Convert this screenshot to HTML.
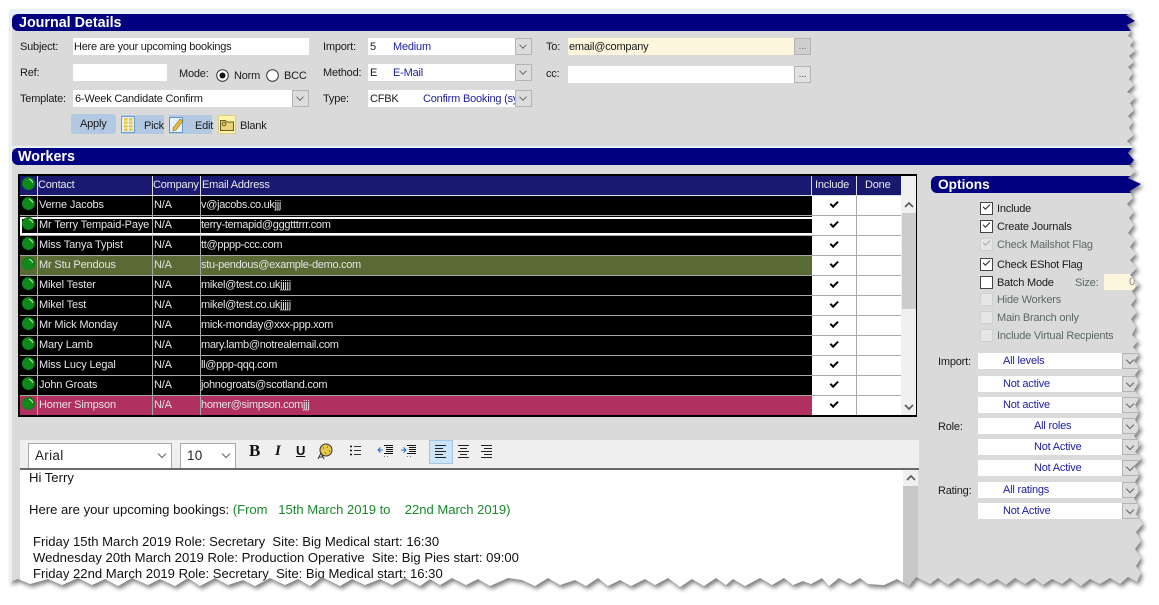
<!DOCTYPE html>
<html><head><meta charset="utf-8"><style>
html,body{margin:0;padding:0;background:#fff}
body{width:1159px;height:605px;overflow:hidden;position:relative;font-family:"Liberation Sans",sans-serif;font-size:11px;letter-spacing:-.2px;color:#1a1a1a}
#shadow{position:absolute;left:0;top:0;width:1159px;height:605px;filter:drop-shadow(2px 3px 2px rgba(0,0,0,.5))}
#page{position:absolute;left:0;top:0;width:1159px;height:605px;background:#dadada;clip-path:polygon(10px 9px,1128px 9px,1132px 13px,1126px 15px,1135px 21px,1127px 25px,1131px 31px,1128px 36px,1134px 40px,1130px 46px,1136px 50px,1129px 56px,1134px 62px,1128px 67px,1133px 73px,1129px 79px,1134px 85px,1127px 92px,1136px 97px,1130px 103px,1134px 110px,1128px 116px,1133px 122px,1129px 128px,1134px 135px,1127px 141px,1133px 147px,1128px 153px,1134px 160px,1129px 166px,1136px 171px,1128px 178px,1141px 184px,1130px 191px,1133px 198px,1127px 204px,1134px 212px,1129px 218px,1134px 225px,1128px 233px,1135px 240px,1130px 247px,1136px 254px,1130px 260px,1137px 268px,1130px 275px,1139px 284px,1132px 291px,1136px 298px,1131px 305px,1137px 312px,1131px 319px,1136px 327px,1132px 335px,1138px 341px,1133px 347px,1139px 354px,1134px 361px,1140px 368px,1135px 375px,1139px 382px,1134px 390px,1140px 397px,1135px 405px,1139px 412px,1135px 420px,1140px 428px,1134px 436px,1141px 444px,1135px 452px,1142px 458px,1134px 466px,1140px 474px,1135px 482px,1140px 490px,1134px 498px,1139px 506px,1136px 514px,1143px 524px,1136px 532px,1141px 541px,1135px 549px,1141px 558px,1136px 566px,1141px 573px,1137px 582px,1128px 577px,1120px 584px,1110px 578px,1100px 584px,1090px 579px,1081px 586px,1070px 578px,1062px 584px,1052px 579px,1043px 585px,1034px 578px,1025px 584px,1015px 578px,1006px 585px,997px 579px,988px 584px,978px 578px,968px 584px,958px 578px,948px 585px,938px 578px,930px 584px,916px 577px,909px 586px,897px 579px,884px 585px,868px 584px,860px 578px,850px 584px,839px 578px,829px 586px,822px 578px,811px 584px,803px 581px,793px 585px,784px 578px,772px 585px,760px 578px,745px 586px,733px 579px,726px 585px,716px 578px,704px 586px,692px 579px,680px 587px,668px 578px,655px 585px,645px 579px,631px 586px,620px 580px,608px 586px,598px 578px,586px 586px,575px 580px,560px 585px,548px 578px,535px 586px,522px 580px,508px 578px,490px 586px,478px 579px,466px 585px,452px 578px,440px 585px,430px 579px,420px 586px,405px 578px,392px 585px,380px 579px,365px 585px,352px 579px,340px 586px,322px 577px,310px 586px,298px 579px,285px 585px,270px 578px,255px 586px,243px 580px,228px 585px,215px 578px,200px 586px,188px 578px,175px 586px,160px 579px,148px 585px,132px 578px,118px 586px,105px 579px,92px 585px,78px 578px,62px 585px,48px 579px,30px 584px,18px 579px,10px 582px)}
.a{position:absolute}
.t{position:absolute;white-space:nowrap;line-height:14px;margin-top:1px}
.b{color:#1c1ca8}
.g{color:#5d6868}
.bar{position:absolute;background:#000080;color:#fff;font-weight:bold;font-size:14.3px;letter-spacing:0;line-height:18px;border-radius:6px 0 0 6px;height:17px;overflow:hidden}
.in{position:absolute;background:#fff;height:17px;overflow:hidden}
.dd{position:absolute;width:15px;height:15px;background:#dcdcdc;border:1px solid #b4b4b4}
.dd:after{content:"";position:absolute;left:4px;top:3px;width:5px;height:5px;border-right:1px solid #666;border-bottom:1px solid #666;transform:rotate(45deg) scale(.9)}
.el{position:absolute;width:15px;height:15px;background:#e2e2e2;border:1px solid #b4b4b4;text-align:center;line-height:16px;font-size:10px;color:#444}
.pb{position:absolute;background:#b3c8e1}
.rw{position:absolute;left:20px;width:881px;height:19px;background:#000;color:#e4e4e4;font-size:11px}
.rw span,.hd span{position:absolute;top:2px;line-height:14px;white-space:nowrap}
.c1{left:19px;letter-spacing:-.15px}.c2{left:134px}.c3{left:181px;letter-spacing:-.3px}
.rw i{position:absolute;top:0;bottom:0;width:1px;background:#a8a8a8}
.inc{position:absolute;left:792px;top:0;width:89px;height:19px;background:#fff}
.inc:before{content:"";position:absolute;left:44px;top:0;width:1px;height:19px;background:#a8a8a8}
.ck{position:absolute;left:18px;top:5px;width:6px;height:2.5px;border-left:2px solid #000;border-bottom:2px solid #000;transform:rotate(-45deg)}
.sep{position:absolute;left:20px;width:881px;height:1px;background:#a8a8a8}
.ball{position:absolute;left:2px;top:1px;width:13px;height:13px;border-radius:50%;background:radial-gradient(circle at 45% 55%,#0f8a1a 45%,#0a6212 100%)}
.ball:after{content:"";position:absolute;left:7px;top:2px;width:3px;height:3px;border-top:1px solid #bfe8b8;border-right:1px solid #bfe8b8;border-radius:0 4px 0 0}
.cb{position:absolute;left:980px;width:11px;height:11px;border:1px solid #444;background:#fff}
.cb.dis{border-color:#d0d0d0;background:#e6e6e6}
.cb.on:after{content:"";position:absolute;left:2px;top:1px;width:6px;height:3px;border-left:1px solid #222;border-bottom:1px solid #222;transform:rotate(-45deg)}
.cb.dis.on:after{border-color:#a8a8a8}
.f{position:absolute;left:978px;width:144px;height:16px;background:#fff;color:#1c1ca8;line-height:17px;font-size:11px;white-space:nowrap}
.fb{position:absolute;left:1122px;width:15px;height:14px;background:#dcdcdc;border:1px solid #b4b4b4}
.fb:after{content:"";position:absolute;left:4px;top:3px;width:5px;height:5px;border-right:1px solid #666;border-bottom:1px solid #666;transform:rotate(45deg)}
.sel{position:absolute;top:443px;height:25px;background:#fff;border:1px solid #a8a8a8;border-bottom:0;box-sizing:border-box;font-size:13.5px;letter-spacing:.3px;line-height:24px;padding-left:6px;color:#222}
.sel:after{content:"";position:absolute;right:6px;top:7px;width:5px;height:5px;border-right:1px solid #666;border-bottom:1px solid #666;transform:rotate(45deg)}
.ed{position:absolute;left:29px;font-size:13.1px;letter-spacing:0;line-height:16px;white-space:pre;color:#111}
svg{position:absolute;overflow:visible}
</style></head><body>
<div id="shadow"><div id="page">
<div class="a" style="left:0;top:0;width:12px;height:605px;background:#e8f1f8"></div>
<div class="a" style="left:0;top:0;width:10px;height:605px;background:#fff"></div>
<div class="a" style="left:10px;top:9px;width:1130px;height:5px;background:#e8f1f8"></div>
<div class="a" style="left:12px;top:146px;width:1130px;height:2px;background:#e8f1f8"></div>

<div class="bar" style="left:12px;top:14px;width:1130px"><span style="margin-left:7px">Journal Details</span></div>
<div class="bar" style="left:12px;top:148px;width:1130px"><span style="margin-left:6px">Workers</span></div>

<div class="t" style="left:20px;top:39px">Subject:</div>
<div class="in" style="left:73px;top:38px;width:236px"><span class="t" style="left:1px;top:1px;letter-spacing:-.25px">Here are your upcoming bookings</span></div>
<div class="t" style="left:20px;top:65px">Ref:</div>
<div class="in" style="left:73px;top:64px;width:94px"></div>
<div class="t" style="left:179px;top:66px">Mode:</div>
<svg style="left:216px;top:69px" width="13" height="13"><circle cx="6.5" cy="6.5" r="5.8" fill="#fff" stroke="#333"/><circle cx="6.5" cy="6.5" r="3" fill="#111"/></svg>
<div class="t" style="left:234px;top:68px">Norm</div>
<svg style="left:266px;top:69px" width="13" height="13"><circle cx="6.5" cy="6.5" r="5.8" fill="#fff" stroke="#333"/></svg>
<div class="t" style="left:284px;top:68px">BCC</div>
<div class="t" style="left:20px;top:91px">Template:</div>
<div class="in" style="left:73px;top:90px;width:219px"><span class="t" style="left:2px;top:1px">6-Week Candidate Confirm</span></div>
<div class="dd" style="left:292px;top:90px"></div>

<div class="pb" style="left:71px;top:114px;width:45px;height:20px;border-radius:3px"></div>
<div class="t" style="left:80px;top:116px">Apply</div>
<div class="pb" style="left:121px;top:115px;width:43px;height:19px"></div>
<svg style="left:121px;top:116px" width="14" height="17"><rect x=".5" y=".5" width="13" height="16" fill="#dff0fa" stroke="#6f9cc6"/><rect x="3" y="2" width="3.5" height="13" fill="#e8c94a"/><rect x="8" y="2" width="3.5" height="13" fill="#e8c94a"/><path d="M3 5h8.500M3 8.500h8.500M3 12h8.500" stroke="#f6ecc0"/></svg>
<div class="t" style="left:144px;top:118px">Pick</div>
<div class="pb" style="left:169px;top:115px;width:43px;height:19px"></div>
<svg style="left:169px;top:116px" width="15" height="17"><rect x=".5" y="1.500" width="13" height="15" fill="#e6f2fb" stroke="#5f93c4"/><path d="M4 12L11 3l3 2-7 9-3 1z" fill="#e9b93e" stroke="#8a6a1c" stroke-width=".6"/></svg>
<div class="t" style="left:195px;top:118px">Edit</div>
<div class="a" style="left:218px;top:115px;width:18px;height:19px;background:#fdf4a8;border:1px solid #d8cf80;box-sizing:border-box"></div>
<svg style="left:220px;top:118px" width="14" height="13"><path d="M.5 2.500h5l1 1.500h7v8.500H.5z" fill="#e8d27a" stroke="#6c5a20"/><circle cx="4" cy="6" r="1.800" fill="none" stroke="#6c5a20"/></svg>
<div class="t" style="left:240px;top:118px">Blank</div>

<div class="t" style="left:323px;top:39px">Import:</div>
<div class="in" style="left:368px;top:38px;width:147px"><span class="t" style="left:2px;top:1px">5</span><span class="t b" style="left:25px;top:1px">Medium</span></div>
<div class="dd" style="left:515px;top:38px"></div>
<div class="t" style="left:323px;top:65px">Method:</div>
<div class="in" style="left:368px;top:64px;width:147px"><span class="t" style="left:2px;top:1px">E</span><span class="t b" style="left:25px;top:1px">E-Mail</span></div>
<div class="dd" style="left:515px;top:64px"></div>
<div class="t" style="left:323px;top:91px">Type:</div>
<div class="in" style="left:368px;top:90px;width:147px"><span class="t" style="left:2px;top:1px">CFBK</span><span class="t b" style="left:55px;top:1px">Confirm Booking (sys)</span></div>
<div class="dd" style="left:515px;top:90px"></div>

<div class="t" style="left:546px;top:39px">To:</div>
<div class="in" style="left:568px;top:38px;width:226px;background:#fdf5dc"><span class="t" style="left:1px;top:1px">email@company</span></div>
<div class="el" style="left:794px;top:38px;background:#cfcfcf;color:#777">...</div>
<div class="t" style="left:546px;top:66px">cc:</div>
<div class="in" style="left:568px;top:66px;width:226px"></div>
<div class="el" style="left:794px;top:66px">...</div>

<!-- grid -->
<div class="a" style="left:18px;top:174px;width:899px;height:243px;background:#000"></div>
<div class="a" style="left:901px;top:176px;width:15px;height:239px;background:#f0f0f0"></div>
<div class="a" style="left:902px;top:213px;width:14px;height:96px;background:#cdcdcd"></div>
<svg style="left:903px;top:201px" width="12" height="8"><path d="M2 6l4-4 4 4" fill="none" stroke="#606060" stroke-width="1.800"/></svg>
<svg style="left:903px;top:403px" width="12" height="8"><path d="M2 2l4 4 4-4" fill="none" stroke="#606060" stroke-width="1.800"/></svg>

<div class="hd a" style="left:20px;top:176px;width:881px;height:19px;background:#191970;color:#e8e8e8">
<div class="ball"></div>
<span style="left:18px">Contact</span><span style="left:133px">Company</span><span style="left:182px">Email Address</span><span style="left:795px">Include</span><span style="left:845px">Done</span>
<i class="a" style="left:17px;top:0;bottom:0;width:1px;background:#ddd"></i><i class="a" style="left:132px;top:0;bottom:0;width:1px;background:#ddd"></i><i class="a" style="left:180px;top:0;bottom:0;width:1px;background:#ddd"></i><i class="a" style="left:791px;top:0;bottom:0;width:1px;background:#ddd"></i><i class="a" style="left:836px;top:0;bottom:0;width:1px;background:#ddd"></i>
</div>
<div class="sep" style="top:195px;background:#e0e0e0"></div>

<div class="rw" style="top:196px"><div class="ball"></div><i style="left:17px"></i><i style="left:132px"></i><i style="left:180px"></i><span class="c1">Verne Jacobs</span><span class="c2">N/A</span><span class="c3">v@jacobs.co.ukjjj</span><div class="inc"><div class="ck"></div></div></div>
<div class="sep" style="top:215px"></div>
<div class="rw" style="top:216px"><i style="left:17px"></i><i style="left:132px"></i><i style="left:180px"></i><span class="c1">Mr Terry Tempaid-Paye</span><span class="c2">N/A</span><span class="c3">terry-temapid@gggtttrrr.com</span><div class="inc"><div class="ck"></div></div></div>
<div class="a" style="left:20px;top:217px;width:790px;height:14px;border:2px solid #fff;border-right:0"></div>
<div class="ball" style="left:22px;top:217px"></div>
<div class="sep" style="top:235px"></div>
<div class="rw" style="top:236px"><div class="ball"></div><i style="left:17px"></i><i style="left:132px"></i><i style="left:180px"></i><span class="c1">Miss Tanya Typist</span><span class="c2">N/A</span><span class="c3">tt@pppp-ccc.com</span><div class="inc"><div class="ck"></div></div></div>
<div class="sep" style="top:255px"></div>
<div class="rw" style="top:256px;background:#5a6a35"><div class="ball"></div><i style="left:17px"></i><i style="left:132px"></i><i style="left:180px"></i><span class="c1">Mr Stu Pendous</span><span class="c2">N/A</span><span class="c3">stu-pendous@example-demo.com</span><div class="inc"><div class="ck"></div></div></div>
<div class="sep" style="top:275px"></div>
<div class="rw" style="top:276px"><div class="ball"></div><i style="left:17px"></i><i style="left:132px"></i><i style="left:180px"></i><span class="c1">Mikel Tester</span><span class="c2">N/A</span><span class="c3">mikel@test.co.ukjjjjj</span><div class="inc"><div class="ck"></div></div></div>
<div class="sep" style="top:295px"></div>
<div class="rw" style="top:296px"><div class="ball"></div><i style="left:17px"></i><i style="left:132px"></i><i style="left:180px"></i><span class="c1">Mikel Test</span><span class="c2">N/A</span><span class="c3">mikel@test.co.ukjjjjj</span><div class="inc"><div class="ck"></div></div></div>
<div class="sep" style="top:315px"></div>
<div class="rw" style="top:316px"><div class="ball"></div><i style="left:17px"></i><i style="left:132px"></i><i style="left:180px"></i><span class="c1">Mr Mick Monday</span><span class="c2">N/A</span><span class="c3">mick-monday@xxx-ppp.xom</span><div class="inc"><div class="ck"></div></div></div>
<div class="sep" style="top:335px"></div>
<div class="rw" style="top:336px"><div class="ball"></div><i style="left:17px"></i><i style="left:132px"></i><i style="left:180px"></i><span class="c1">Mary Lamb</span><span class="c2">N/A</span><span class="c3">mary.lamb@notrealemail.com</span><div class="inc"><div class="ck"></div></div></div>
<div class="sep" style="top:355px"></div>
<div class="rw" style="top:356px"><div class="ball"></div><i style="left:17px"></i><i style="left:132px"></i><i style="left:180px"></i><span class="c1">Miss Lucy Legal</span><span class="c2">N/A</span><span class="c3">ll@ppp-qqq.com</span><div class="inc"><div class="ck"></div></div></div>
<div class="sep" style="top:375px"></div>
<div class="rw" style="top:376px"><div class="ball"></div><i style="left:17px"></i><i style="left:132px"></i><i style="left:180px"></i><span class="c1">John Groats</span><span class="c2">N/A</span><span class="c3">johnogroats@scotland.com</span><div class="inc"><div class="ck"></div></div></div>
<div class="sep" style="top:395px"></div>
<div class="rw" style="top:396px;background:#b03060"><div class="ball"></div><i style="left:17px"></i><i style="left:132px"></i><i style="left:180px"></i><span class="c1">Homer Simpson</span><span class="c2">N/A</span><span class="c3">homer@simpson.comjjj</span><div class="inc"><div class="ck"></div></div></div>

<!-- options -->
<div class="bar" style="left:931px;top:176px;width:215px;font-size:13.7px"><span style="margin-left:7px">Options</span></div>
<div class="cb on" style="top:202px"></div><div class="t" style="left:997px;top:201px">Include</div>
<div class="cb on" style="top:220px"></div><div class="t" style="left:997px;top:219px">Create Journals</div>
<div class="cb dis on" style="top:238px"></div><div class="t g" style="left:997px;top:237px">Check Mailshot Flag</div>
<div class="cb on" style="top:258px"></div><div class="t" style="left:997px;top:257px">Check EShot Flag</div>
<div class="cb" style="top:276px"></div><div class="t" style="left:997px;top:275px">Batch Mode</div>
<div class="t g" style="left:1075px;top:275px">Size:</div>
<div class="a" style="left:1104px;top:274px;width:31px;height:16px;background:#fdf5dc;text-align:right;line-height:17px;color:#888">0</div>
<div class="cb dis" style="top:293px"></div><div class="t g" style="left:997px;top:292px">Hide Workers</div>
<div class="cb dis" style="top:311px"></div><div class="t g" style="left:997px;top:310px">Main Branch only</div>
<div class="cb dis" style="top:329px"></div><div class="t g" style="left:997px;top:328px">Include Virtual Recpients</div>

<div class="t" style="left:938px;top:354px">Import:</div>
<div class="f" style="top:353px"><span style="margin-left:25px">All levels</span></div><div class="fb" style="top:353px"></div>
<div class="f" style="top:376px"><span style="margin-left:25px">Not active</span></div><div class="fb" style="top:376px"></div>
<div class="f" style="top:397px"><span style="margin-left:25px">Not active</span></div><div class="fb" style="top:397px"></div>
<div class="t" style="left:938px;top:419px">Role:</div>
<div class="f" style="top:418px"><span style="margin-left:56px">All roles</span></div><div class="fb" style="top:418px"></div>
<div class="f" style="top:439px"><span style="margin-left:56px">Not Active</span></div><div class="fb" style="top:439px"></div>
<div class="f" style="top:460px"><span style="margin-left:56px">Not Active</span></div><div class="fb" style="top:460px"></div>
<div class="t" style="left:938px;top:483px">Rating:</div>
<div class="f" style="top:482px"><span style="margin-left:25px">All ratings</span></div><div class="fb" style="top:482px"></div>
<div class="f" style="top:503px"><span style="margin-left:25px">Not Active</span></div><div class="fb" style="top:503px"></div>

<!-- editor -->
<div class="a" style="left:20px;top:440px;width:899px;height:28px;background:#efefef"></div>
<div class="a" style="left:20px;top:468px;width:899px;height:2px;background:#6a6a6a"></div>
<div class="a" style="left:20px;top:470px;width:883px;height:130px;background:#fff"></div>
<div class="a" style="left:903px;top:470px;width:15px;height:17px;background:#f0f0f0"></div>
<div class="a" style="left:903px;top:486px;width:15px;height:110px;background:#c8c8c8"></div>
<svg style="left:905px;top:474px" width="12" height="8"><path d="M2 6l4-4 4 4" fill="none" stroke="#606060" stroke-width="1.800"/></svg>

<div class="sel" style="left:28px;width:144px">Arial</div>
<div class="sel" style="left:180px;width:56px">10</div>
<div class="t" style="left:249px;top:442px;font:bold 17px/16px 'Liberation Serif',serif;color:#111">B</div>
<div class="t" style="left:275px;top:442px;font:italic bold 15px/16px 'Liberation Serif',serif;color:#111">I</div>
<div class="t" style="left:296px;top:442px;font:bold 13px/16px 'Liberation Sans',sans-serif;color:#111;text-decoration:underline">U</div>
<svg style="left:316px;top:443px" width="18" height="17"><circle cx="10" cy="7" r="6" fill="#e8c94a" stroke="#333"/><path d="M7 5h1M11 4h1M13 8h1M9 10h1" stroke="#333"/><path d="M2 16l3-6 3 6M3 14h4" fill="none" stroke="#333"/></svg>
<svg style="left:350px;top:445px" width="12" height="11"><path d="M0 1.500h2M0 5.500h2M0 9.500h2" stroke="#111" stroke-width="1.500"/><path d="M4 1.500h7M4 5.500h7M4 9.500h7" stroke="#333"/></svg>
<svg style="left:378px;top:444px" width="16" height="14"><path d="M6 1.500h9M8 3.500h7M8 5.500h7M8 7.500h7M6 9.500h9" stroke="#111"/><path d="M0 6h5M2.500 3.500L0 6l2.500 2.500" stroke="#1f6fc9" fill="none"/><path d="M6 12.500h1M9 12.500h1" stroke="#777"/></svg>
<svg style="left:401px;top:444px" width="16" height="14"><path d="M6 1.500h9M8 3.500h7M8 5.500h7M8 7.500h7M6 9.500h9" stroke="#111"/><path d="M0 6h5M2.500 3.500L5 6 2.500 8.500" stroke="#1f6fc9" fill="none"/><path d="M6 12.500h1M9 12.500h1" stroke="#777"/></svg>
<div class="a" style="left:429px;top:440px;width:22px;height:22px;background:#cce4f7;border:1px solid #a4c6e2"></div>
<svg style="left:435px;top:445px" width="11" height="13"><path d="M0 .500h11M0 3.500h8M0 6.500h11M0 9.500h8M0 12.500h11" stroke="#222"/></svg>
<svg style="left:458px;top:445px" width="11" height="13"><path d="M0 .500h11M2 3.500h7M0 6.500h11M2 9.500h7M0 12.500h11" stroke="#222"/></svg>
<svg style="left:481px;top:445px" width="11" height="13"><path d="M0 .500h11M3 3.500h8M0 6.500h11M3 9.500h8M0 12.500h11" stroke="#222"/></svg>

<div class="ed" style="top:470px">Hi Terry</div>
<div class="ed" style="top:502px">Here are your upcoming bookings: <span style="color:#178a2c;letter-spacing:-.04px">(From   15th March 2019 to    22nd March 2019)</span></div>
<div class="ed" style="top:534px;left:33px">Friday 15th March 2019 Role: Secretary  Site: Big Medical start: 16:30</div>
<div class="ed" style="top:550px;left:33px">Wednesday 20th March 2019 Role: Production Operative  Site: Big Pies start: 09:00</div>
<div class="ed" style="top:566px;left:33px">Friday 22nd March 2019 Role: Secretary  Site: Big Medical start: 16:30</div>
</div></div>
</body></html>
